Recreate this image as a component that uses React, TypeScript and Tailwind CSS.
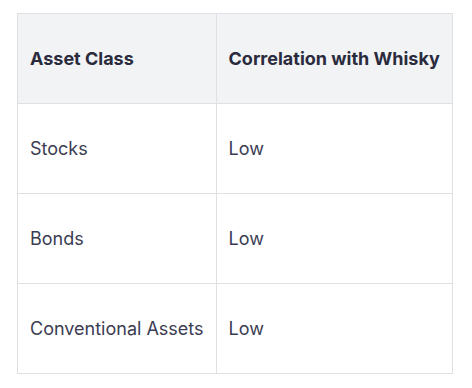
const rows = [
  { asset: "Stocks", corr: "Low" },
  { asset: "Bonds", corr: "Low" },
  { asset: "Conventional Assets", corr: "Low" },
];

export default function App() {
  return (
    <div className="min-h-screen bg-white pl-[17px] pt-[13px] font-['Inter',sans-serif]">
      <table className="border-collapse text-[18px]">
        <thead>
          <tr className="bg-[#f2f3f5]">
            <th className="h-[90px] border border-[#dfe0e4] px-3 text-left font-bold text-[#2a2b3d]">
              Asset Class
            </th>
            <th className="h-[90px] border border-[#dfe0e4] px-3 text-left font-bold text-[#2a2b3d]">
              Correlation with Whisky
            </th>
          </tr>
        </thead>
        <tbody>
          {rows.map((r) => (
            <tr key={r.asset}>
              <td className="h-[90px] border border-[#dfe0e4] px-3 text-[#3b3c52]">
                {r.asset}
              </td>
              <td className="h-[90px] border border-[#dfe0e4] px-3 text-[#3b3c52]">
                {r.corr}
              </td>
            </tr>
          ))}
        </tbody>
      </table>
    </div>
  );
}
